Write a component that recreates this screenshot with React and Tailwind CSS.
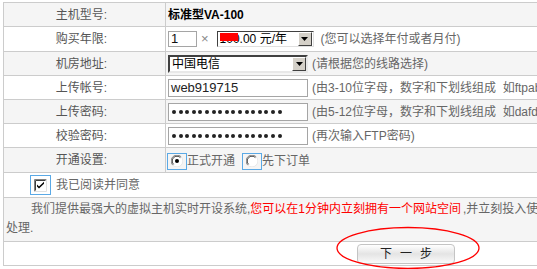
import React from "react";

const border = "border-[#cccccc]";

function Label({ children }) {
  return (
    <div className={`w-[162px] shrink-0 border-r ${border} flex items-center justify-end pr-[58px] text-[12px] leading-[14px] text-[#555]`}>
      {children}
    </div>
  );
}

function Row({ h, gray, children }) {
  return (
    <div className={`flex ${h} border-b ${border} ${gray ? "bg-[#f5f5f5]" : "bg-white"}`}>
      {children}
    </div>
  );
}

function Arrow() {
  return (
    <div className="w-[14px] h-[14px] bg-[#d4d0c8] border border-t-white border-l-white border-r-[#404040] border-b-[#404040] flex items-center justify-center">
      <svg width="7" height="4" viewBox="0 0 7 4"><path d="M0 0H7L3.5 4Z" fill="#000" /></svg>
    </div>
  );
}

function Dots() {
  return (
    <div className="w-[140px] h-[18px] bg-white border border-[#a5a5a5] flex items-center pl-[3px] gap-[2.6px]">
      {Array.from({ length: 17 }).map((_, i) => (
        <span key={i} className="w-[4px] h-[4px] rounded-full bg-[#222] shrink-0" />
      ))}
    </div>
  );
}

function Radio({ checked }) {
  return (
    <div className="w-[20px] h-[17px] border border-[#5aa9e6] flex items-center justify-center">
      <svg width="12" height="12" viewBox="0 0 12 12">
        <circle cx="6" cy="6" r="5.5" fill="#fff" />
        <path d="M1.8 10.2A5.5 5.5 0 0 1 10.2 1.8" fill="none" stroke="#808080" strokeWidth="1" />
        <path d="M2.6 9.4A4.4 4.4 0 0 1 9.4 2.6" fill="none" stroke="#404040" strokeWidth="1" />
        <path d="M10.2 1.8A5.5 5.5 0 0 1 1.8 10.2" fill="none" stroke="#e8e8e8" strokeWidth="1" />
        {checked && <circle cx="6" cy="6" r="2" fill="#000" />}
      </svg>
    </div>
  );
}

export default function App() {
  const hint = "text-[12px] leading-[14px] text-[#666] whitespace-nowrap";
  return (
    <div className="relative w-[537px] h-[269px] overflow-hidden bg-white font-['Liberation_Sans','Noto_Sans_CJK_SC',sans-serif]">
      <div className={`mt-[2px] ml-[3px] w-[640px] border-t border-l ${border}`}>
        <Row h="h-[24px]" gray>
          <Label>主机型号:</Label>
          <div className="flex items-center pl-[2px] text-[12px] font-bold text-black">标准型VA-100</div>
        </Row>
        <Row h="h-[25px]">
          <Label>购买年限:</Label>
          <div className="flex items-center pl-[2px]">
            <div className="w-[29px] h-[16px] border border-[#a5a5a5] bg-white text-[13px] leading-[14px] text-[#111] pl-[2px]">1</div>
            <span className="text-[13px] text-[#888] ml-[4px] mr-[8px] leading-[14px]">×</span>
            <div className="relative w-[97px] h-[16px] border border-t-[#404040] border-l-[#404040] border-r-[#e0e0e0] border-b-[#e0e0e0] bg-white flex items-center justify-between pr-[1px]">
              <span className="text-[12px] leading-[14px] text-black pl-[2px] whitespace-nowrap">100.00 元/年</span>
              <Arrow />
              <span className="absolute left-[2px] top-[1px] w-[18px] h-[8px] bg-[#ff0000]" />
            </div>
            <span className={`${hint} ml-[7px]`}>(您可以选择年付或者月付)</span>
          </div>
        </Row>
        <Row h="h-[24px]" gray>
          <Label>机房地址:</Label>
          <div className="flex items-center pl-[2px]">
            <div className="w-[140px] h-[18px] border-2 border-t-[#404040] border-l-[#404040] border-r-[#e8e8e8] border-b-[#e8e8e8] bg-white flex items-center justify-between pr-[0px]">
              <span className="text-[12px] leading-[14px] text-black pl-[2px]">中国电信</span>
              <Arrow />
            </div>
            <span className={`${hint} ml-[4px]`}>(请根据您的线路选择)</span>
          </div>
        </Row>
        <Row h="h-[24px]">
          <Label>上传帐号:</Label>
          <div className="flex items-center pl-[2px]">
            <div className="w-[140px] h-[18px] border border-[#a5a5a5] bg-white text-[13px] leading-[16px] text-[#222] pl-[2px]">web919715</div>
            <span className={`${hint} ml-[4px]`}>(由3-10位字母，数字和下划线组成&nbsp;&nbsp;如ftpabc_1)</span>
          </div>
        </Row>
        <Row h="h-[24px]" gray>
          <Label>上传密码:</Label>
          <div className="flex items-center pl-[2px]">
            <Dots />
            <span className={`${hint} ml-[4px]`}>(由5-12位字母，数字和下划线组成&nbsp;&nbsp;如dafdd_1)</span>
          </div>
        </Row>
        <Row h="h-[24px]">
          <Label>校验密码:</Label>
          <div className="flex items-center pl-[2px]">
            <Dots />
            <span className={`${hint} ml-[4px]`}>(再次输入FTP密码)</span>
          </div>
        </Row>
        <Row h="h-[25px]" gray>
          <Label>开通设置:</Label>
          <div className="flex items-center pl-[1px] pt-[2px]">
            <Radio checked />
            <span className={`${hint} text-[#555]`}>正式开通</span>
            <span className="w-[7px]" />
            <Radio />
            <span className={`${hint} text-[#555]`}>先下订单</span>
          </div>
        </Row>
        <Row h="h-[25px]">
          <div className="flex items-center pl-[26px]">
            <div className="w-[21px] h-[20px] border border-[#5aa9e6] flex items-center justify-center">
              <svg width="13" height="13" viewBox="0 0 13 13">
                <rect x="0" y="0" width="13" height="13" fill="#fff" />
                <path d="M0.5 12.5V0.5H12.5" fill="none" stroke="#808080" />
                <path d="M1.5 11.5V1.5H11.5" fill="none" stroke="#404040" />
                <path d="M0.5 12.5H12.5V0.5" fill="none" stroke="#e0e0e0" />
                <path d="M3 5.5L5 7.5L10 2.8V4.8L5 9.5L3 7.5Z" fill="#000" />
              </svg>
            </div>
            <span className={`${hint} ml-[5px]`}>我已阅读并同意</span>
          </div>
        </Row>
        <Row h="h-[44px]" gray>
          <div className="pl-[2px] pt-[2px] text-[12px] leading-[19px] text-[#666] whitespace-nowrap">
            <div className="pl-[25px]">
              我们提供最强大的虚拟主机实时开设系统,
              <span className="text-[#ff0000]">您可以在1分钟内立刻拥有一个网站空间</span>
              <span className="ml-[2px]">,并立刻投入使用，无需等待人工</span>
            </div>
            <div>处理.</div>
          </div>
        </Row>
        <Row h="h-[24px]">
          <div className="flex items-center pl-[353px]">
            <div className="w-[98px] h-[20px] rounded-[4px] border border-[#c4c4c4] bg-linear-to-b from-white via-[#e4e4e4] to-[#fafafa] flex items-center justify-center gap-[8px] text-[12px] leading-[14px] text-[#222]">
              <span>下</span><span>一</span><span>步</span>
            </div>
          </div>
        </Row>
      </div>
      <svg className="absolute left-[335px] top-[226px]" width="146" height="44" viewBox="0 0 146 44">
        <ellipse cx="73" cy="22" rx="71" ry="20.5" fill="none" stroke="#ff0000" strokeWidth="1.3" />
      </svg>
    </div>
  );
}
